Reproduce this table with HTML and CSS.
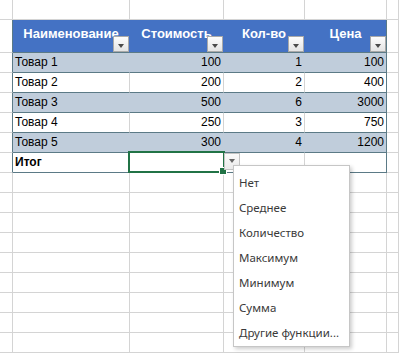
FILE: index.html
```html
<!DOCTYPE html>
<html lang="ru">
<head>
    <meta charset="UTF-8">
    <meta name="viewport" content="width=device-width, initial-scale=1.0">
    <title>Итоги таблицы</title>
    <link rel="stylesheet" href="styles.css">
</head>
<body>
    <div class="sheet">
        <!-- row 1 -->
        <div></div><div></div><div></div><div></div><div></div><div></div>

        <!-- table header -->
        <div class="edge"></div>
        <div class="head">Наименование<span class="filter"></span></div>
        <div class="head">Стоимость<span class="filter"></span></div>
        <div class="head">Кол-во<span class="filter"></span></div>
        <div class="head last">Цена<span class="filter"></span></div>
        <div></div>

        <div class="edge"></div>
        <div class="cell band">Товар 1</div>
        <div class="cell band num">100</div>
        <div class="cell band num">1</div>
        <div class="cell band num last">100</div>
        <div></div>

        <div class="edge"></div>
        <div class="cell">Товар 2</div>
        <div class="cell num">200</div>
        <div class="cell num">2</div>
        <div class="cell num last">400</div>
        <div></div>

        <div class="edge"></div>
        <div class="cell band">Товар 3</div>
        <div class="cell band num">500</div>
        <div class="cell band num">6</div>
        <div class="cell band num last">3000</div>
        <div></div>

        <div class="edge"></div>
        <div class="cell">Товар 4</div>
        <div class="cell num">250</div>
        <div class="cell num">3</div>
        <div class="cell num last">750</div>
        <div></div>

        <div class="edge"></div>
        <div class="cell band">Товар 5</div>
        <div class="cell band num">300</div>
        <div class="cell band num">4</div>
        <div class="cell band num last">1200</div>
        <div></div>

        <div class="edge"></div>
        <div class="cell total">Итог</div>
        <div class="cell"></div>
        <div class="cell"></div>
        <div class="cell last"></div>
        <div></div>

        <!-- empty rows below -->
        <div></div><div></div><div></div><div></div><div></div><div></div>
        <div></div><div></div><div></div><div></div><div></div><div></div>
        <div></div><div></div><div></div><div></div><div></div><div></div>
        <div></div><div></div><div></div><div></div><div></div><div></div>
        <div></div><div></div><div></div><div></div><div></div><div></div>
        <div></div><div></div><div></div><div></div><div></div><div></div>
        <div></div><div></div><div></div><div></div><div></div><div></div>
        <div></div><div></div><div></div><div></div><div></div><div></div>
        <div></div><div></div><div></div><div></div><div></div><div></div>

        <!-- active cell + totals dropdown -->
        <div class="selection"><span class="handle"></span></div>
        <span class="filter picker"></span>

        <ul class="menu">
            <li>Нет</li>
            <li>Среднее</li>
            <li>Количество</li>
            <li>Максимум</li>
            <li>Минимум</li>
            <li>Сумма</li>
            <li>Другие функции...</li>
        </ul>
    </div>
</body>
</html>
```

FILE: styles.css
```css
body {
    margin: 0;
    background: #fff;
    font-family: "Liberation Sans", Arial, sans-serif;
    overflow: hidden;
}

.sheet {
    position: relative;
    display: grid;
    grid-template-columns: 13px 117px 94px 81px 82px 1fr;
    grid-template-rows: 20px 33px;
    grid-auto-rows: 20px;
    font-size: 12px;
    color: #000;
}

.sheet > div {
    box-sizing: border-box;
    border-right: 1px solid #d4d4d4;
    border-bottom: 1px solid #d4d4d4;
}

.sheet > .edge {
    border-right-color: #5b7a86;
}

.head {
    position: relative;
    display: flex;
    justify-content: center;
    align-items: center;
    padding-bottom: 5px;
    background: #4472c4;
    color: #fff;
    font-weight: bold;
    font-size: 13px;
    white-space: nowrap;
    overflow: hidden;
}

.sheet > .head {
    border-right-color: #4472c4;
    border-bottom-color: #5b7a86;
}

.cell {
    display: flex;
    align-items: flex-end;
    padding: 0 2px 3px 2px;
    white-space: nowrap;
}

.sheet > .cell {
    border-bottom-color: #5b7a86;
}

.sheet > .band {
    background: #c0cddb;
    border-right-color: #c0cddb;
}

.sheet > .last {
    border-right-color: #5b7a86;
}

.num {
    justify-content: flex-end;
}

.total {
    font-weight: bold;
}

/* small filter button with a down arrow */
.filter {
    position: absolute;
    right: 0;
    bottom: 0;
    width: 16px;
    height: 16px;
    box-sizing: border-box;
    border: 1px solid #a9a9a9;
    background: linear-gradient(#fdfdfd, #e4e4e4);
}

.filter::after {
    content: "";
    position: absolute;
    left: 4px;
    top: 7px;
    border-left: 3.5px solid transparent;
    border-right: 3.5px solid transparent;
    border-top: 4px solid #4a4a4a;
}

.picker {
    right: auto;
    bottom: auto;
    left: 224px;
    top: 153px;
    height: 17px;
    border-color: #c4c4c4;
    background: linear-gradient(#fafafa, #ebebeb);
}

.picker::after {
    top: 5px;
    border-top-color: #666;
}

.selection {
    position: absolute;
    left: 128px;
    top: 151px;
    width: 97px;
    height: 22px;
    box-sizing: border-box;
    border: 2px solid #217346 !important;
}

.handle {
    position: absolute;
    right: -4px;
    bottom: -4px;
    width: 6px;
    height: 6px;
    background: #217346;
    border: 1px solid #fff;
}

.menu {
    position: absolute;
    left: 233px;
    top: 165px;
    width: 117px;
    box-sizing: border-box;
    margin: 0;
    padding: 4px 0 1px;
    list-style: none;
    background: #fff;
    border: 1px solid #c6c6c6;
    box-shadow: 2px 2px 4px rgba(0, 0, 0, 0.2);
    font-family: "Noto Sans", "Open Sans", sans-serif;
    font-size: 11.5px;
    color: #3a3a3a;
}

.menu li {
    height: 25px;
    line-height: 25px;
    padding-left: 5px;
    white-space: nowrap;
}
```
